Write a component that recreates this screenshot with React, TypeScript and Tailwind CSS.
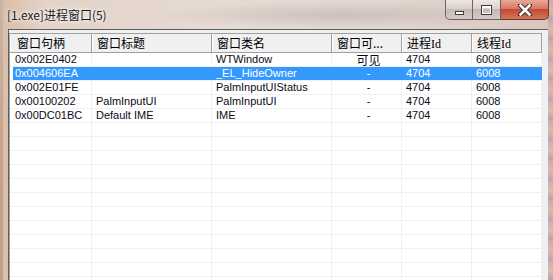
import React from "react";

const cols = [82, 120, 120, 70, 70, 70];
const headers = ["窗口句柄", "窗口标题", "窗口类名", "窗口可...", "进程Id", "线程Id"];
const rows: string[][] = [
  ["0x002E0402", "", "WTWindow", "可见", "4704", "6008"],
  ["0x004606EA", "", "_EL_HideOwner", "-", "4704", "6008"],
  ["0x002E01FE", "", "PalmInputUIStatus", "-", "4704", "6008"],
  ["0x00100202", "PalmInputUI", "PalmInputUI", "-", "4704", "6008"],
  ["0x00DC01BC", "Default IME", "IME", "-", "4704", "6008"],
];
const total = 17;

export default function App() {
  const data: string[][] = [...rows];
  while (data.length < total) data.push(["", "", "", "", "", ""]);
  return (
    <div className="relative w-[553px] h-[280px] overflow-hidden bg-[linear-gradient(90deg,#d9bca6_0%,#e3d3c9_8%,#e6dad3_40%,#e2d6cf_70%,#d8c6c0_100%)]">
      {/* glass blur blobs */}
      <div className="absolute left-[150px] top-[2px] w-[380px] h-[26px] bg-[radial-gradient(ellipse_at_center,rgba(160,150,150,0.35)_0%,rgba(160,150,150,0)_70%)]" />
      <div className="absolute left-0 top-0 w-[3px] h-full bg-[linear-gradient(180deg,#c9b5a8,#c7a38c_50%,#bda08c)]" />
      <div className="absolute right-0 top-0 w-[5px] h-full bg-[repeating-linear-gradient(180deg,#c7aab0_0px,#d8bca8_10px,#b9a3ab_20px)]" />

      {/* title bar */}
      <div className="relative h-[29px] flex items-start">
        <div className="pl-[7px] pt-[7px] text-[12px] leading-[16px] text-[#1b1b1b] [font-family:'Noto_Sans_CJK_SC','Liberation_Sans',sans-serif] [text-shadow:0_0_6px_#fff,0_0_3px_#fff]">
          [1.exe]进程窗口(5)
        </div>
        <div className="absolute left-[445px] top-0 flex">
          <div className="w-[28px] h-[20px] rounded-bl-[5px] border border-t-0 border-[#6e625e] bg-[linear-gradient(180deg,#efe7e3_0%,#dcd0ca_45%,#c6b8b2_50%,#d6cbc6_100%)] flex items-center justify-center">
            <div className="mt-[6px] w-[7px] h-[2px] bg-white border border-[#3c3c3c] box-content" />
          </div>
          <div className="w-[28px] h-[20px] border-b border-r border-[#6e625e] bg-[linear-gradient(180deg,#efe7e3_0%,#dcd0ca_45%,#c6b8b2_50%,#d6cbc6_100%)] flex items-center justify-center">
            <div className="w-[7px] h-[5px] border-[1.5px] border-t-[2px] border-white outline outline-1 outline-[#3c3c3c] box-content" />
          </div>
          <div className="w-[48px] h-[20px] rounded-br-[5px] border-b border-r border-[#6a3a30] bg-[linear-gradient(180deg,#e9a898_0%,#d87a64_45%,#c24a30_50%,#d2765c_100%)] flex items-center justify-center">
            <svg width="14" height="12" viewBox="0 0 14 12">
              <path d="M2 1 L12 11 M12 1 L2 11" stroke="#3a2a28" strokeWidth="4.5" strokeLinecap="square" />
              <path d="M2.5 1.5 L11.5 10.5 M11.5 1.5 L2.5 10.5" stroke="#ffffff" strokeWidth="2.6" strokeLinecap="square" />
            </svg>
          </div>
        </div>
      </div>

      {/* client area */}
      <div className="ml-[8px] mr-[4px] h-[260px] border-l border-t border-r border-[#5e5e5e] bg-[#f0f0f0] flex flex-col">
        <div className="h-[3px] shrink-0" />
        <div className="flex-1 flex">
          <div className="w-[533px] border-l border-t border-[#a0a0a0] bg-white flex flex-col overflow-hidden">
            {/* header */}
            <div className="flex h-[19px] shrink-0 border-b border-[#a0a0a0] [font-family:'Liberation_Serif','Noto_Sans_CJK_SC',serif] text-[12px] text-black">
              {headers.map((h, i) => (
                <div
                  key={i}
                  style={{ width: cols[i] }}
                  className={`shrink-0 h-full flex items-center border-l border-white border-r border-r-[#a0a0a0] bg-[#f0f0f0] ${
                    i === 0 ? "pl-[6px]" : "pl-[4px]"
                  }`}
                >
                  <span className="[font-family:'Noto_Sans_CJK_SC',serif] leading-[14px] whitespace-nowrap">
                    {h.replace("Id", "")}
                    {h.endsWith("Id") && <span className="[font-family:'Liberation_Serif',serif]">Id</span>}
                  </span>
                </div>
              ))}
            </div>
            {/* rows */}
            {data.map((r, ri) => {
              const sel = ri === 1;
              return (
                <div
                  key={ri}
                  className="flex h-[14px] shrink-0 border-b border-[#f0f0f0] text-[11px] leading-[13px] [font-family:'Liberation_Sans','Noto_Sans_CJK_SC',sans-serif]"
                >
                  {r.map((c, ci) => (
                    <div
                      key={ci}
                      style={{ width: cols[ci] }}
                      className={`shrink-0 h-full flex border-r ${
                        sel ? "border-[#3399ff]" : "border-[#f0f0f0]"
                      }`}
                    >
                      <div
                        className={`flex-1 h-full flex items-center whitespace-nowrap ${
                          ci === 3 ? "overflow-visible" : "overflow-hidden"
                        } ${ci === 0 ? "ml-[3px] pl-[2px]" : "pl-[4px]"} ${
                          ci === 3 ? "justify-center pl-0" : ""
                        } ${sel ? "bg-[#3399ff] text-white" : "text-[#0a0a14]"}`}
                      >
                        {ci === 3 && c === "可见" ? (
                          <span className="text-[12px] leading-[12px] [font-family:'Noto_Sans_CJK_SC',sans-serif]">
                            {c}
                          </span>
                        ) : (
                          <span>{c}</span>
                        )}
                      </div>
                    </div>
                  ))}
                </div>
              );
            })}
          </div>
          <div className="flex-1" />
        </div>
      </div>
    </div>
  );
}
